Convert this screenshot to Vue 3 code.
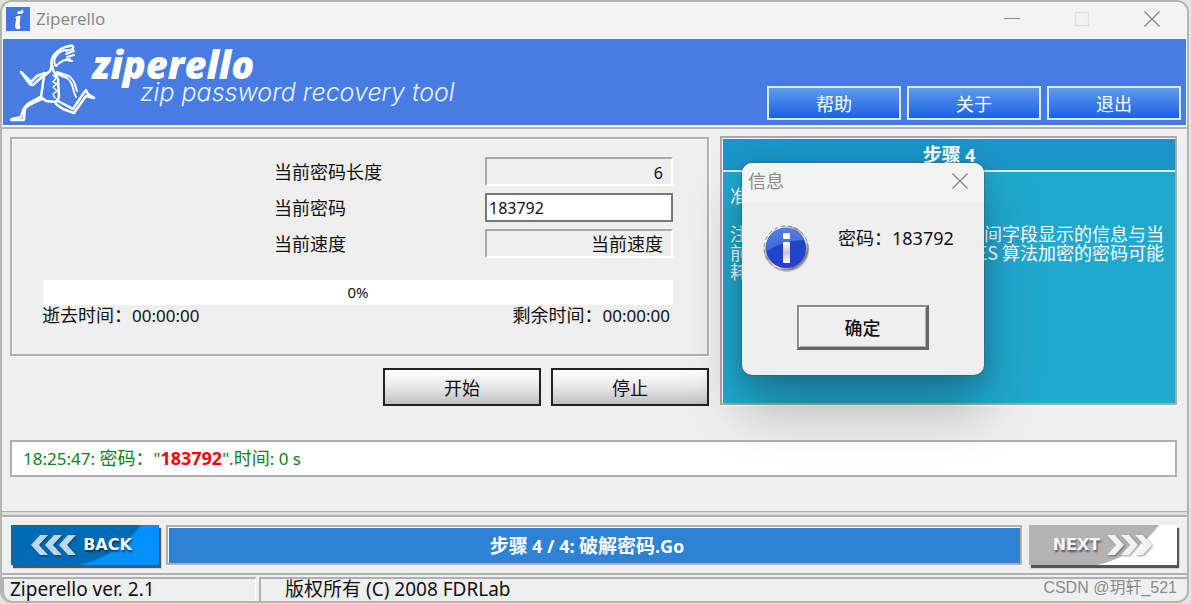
<script setup>
import { ref } from 'vue'

const password = ref('183792')
const menu = ['帮助', '关于', '退出']
const hints = [
  { start: '注', end: '间字段显示的信息与当' },
  { start: '前', end: 'AES 算法加密的密码可能' },
  { start: '耗', end: '' },
]
</script>

<template>
  <div class="desktop">
    <div class="window">
      <header class="titlebar">
        <svg class="app-icon" viewBox="0 0 24 24" aria-hidden="true">
          <rect width="24" height="24" fill="#3f78e0" />
          <path d="M10 9.500l4.500-1-.8 8.500q-.4 2 1 2.500l-1 2.500q-5 .8-4.600-3.500l1.200-7.200-1.200-.2z" fill="#fff" />
          <path d="M11 7l1-3 2 .5 3-2.500-.3 2.500 1.300-.2-2 2.700z" fill="#fff" />
        </svg>
        <span class="app-name">Ziperello</span>
        <button class="caption" aria-label="最小化">
          <svg viewBox="0 0 16 16"><path d="M0 7.500h16" stroke="#8b8b8b" /></svg>
        </button>
        <button class="caption" aria-label="最大化" disabled>
          <svg viewBox="0 0 16 16"><rect x="1.500" y="1.500" width="13" height="13" fill="none" stroke="#dedede" stroke-width="1.300" /></svg>
        </button>
        <button class="caption" aria-label="关闭">
          <svg viewBox="0 0 16 16"><path d="M.5.5l15 15M15.500.5l-15 15" stroke="#858585" stroke-width="1.200" /></svg>
        </button>
      </header>

      <div class="banner">
        <svg class="runner" viewBox="0 0 90 80" fill="none" stroke="#fff" stroke-linecap="round" stroke-linejoin="round" aria-hidden="true">
          <path d="M44 25q-2-9 3-14 6-7 15-8 4-1 3 2" stroke-width="2.500" />
          <path d="M47 22q-2-6 2-10 4-5 10-5M48 23q7-7 14-7M58 8l7-2M58 11l8-3M59 14l7-2M58 17l6 1" stroke-width="2" />
          <path d="M44 22l-2 6-6 5-3 21 5 4 10 1 3-5-1-18-5-9-1-5" stroke-width="2.500" />
          <path d="M45 32l3 3-3 4 4 2-4 3 4 4-4 3 2 4" stroke-width="1.500" />
          <path d="M37 30l-8 3-6 6-10-10 8 11q3 4 6 0l7-6" stroke-width="2.500" />
          <path d="M49 29l12 4q5 3 8 15M49 31l10 4q5 3 7 14l2 5" stroke-width="2" />
          <path d="M32 54l-11 6q-6 4-8 14l-9 2q-2 1 1 1h10q2 0 1-2l1-9q2-4 17-10" stroke-width="2.500" />
          <path d="M50 58l15 8 10-15 3-4 2 4 6 4-8-2-12 17-11-4-7-5" stroke-width="2.500" />
        </svg>
        <div class="brand">
          <span class="brand-name">ziperello</span>
          <span class="tagline">zip password recovery tool</span>
        </div>
        <nav class="menu">
          <button v-for="item in menu" :key="item" class="menu-item">{{ item }}</button>
        </nav>
      </div>

      <main class="content">
        <div class="top">
          <div class="left">
            <section class="state">
              <div class="row">
                <label for="len">当前密码长度</label>
                <output id="len" class="sunken"><span class="num">6</span></output>
              </div>
              <div class="row">
                <label for="pwd">当前密码</label>
                <input id="pwd" v-model="password" class="field num" type="text" />
              </div>
              <div class="row">
                <label for="speed">当前速度</label>
                <output id="speed" class="sunken">当前速度</output>
              </div>
              <div class="progress num">0%</div>
              <div class="times">
                <span>逝去时间：<span class="num">00:00:00</span></span>
                <span>剩余时间：<span class="num">00:00:00</span></span>
              </div>
            </section>
            <div class="actions">
              <button class="action">开始</button>
              <button class="action">停止</button>
            </div>
          </div>

          <aside class="help">
            <h2>步骤 <span class="num">4</span></h2>
            <div class="help-body">
              <p class="intro">准</p>
              <p v-for="h in hints" :key="h.start"><span>{{ h.start }}</span><span>{{ h.end }}</span></p>
            </div>
          </aside>
        </div>

        <div class="log">
          <span class="num">18:25:47: </span>密码：<span class="num">"<b>183792</b>".</span>时间<span class="num">: 0 s</span>
        </div>
      </main>

      <div class="wizard">
        <button class="step back">
          <svg class="fill" viewBox="0 0 148 40" preserveAspectRatio="none" aria-hidden="true">
            <path d="M0 0h148v40H0z" fill="#006bb5" />
            <path d="M130 0h18v40H69Q108 30 130 0z" fill="#0091fe" />
          </svg>
          <svg class="arrows" viewBox="0 0 46 22" aria-hidden="true">
            <path d="M10 1h8l-9 10 9 10h-8L1 11zM24 1h8l-9 10 9 10h-8l-9-10zM38 1h8l-9 10 9 10h-8l-9-10z" fill="#bdd6ee" />
          </svg>
          <span>BACK</span>
        </button>
        <div class="stage"><span>步骤 <span class="num">4 / 4:</span> 破解密码<span class="num">.Go</span></span></div>
        <button class="step next">
          <svg class="fill" viewBox="0 0 148 40" preserveAspectRatio="none" aria-hidden="true">
            <path d="M0 0h148v40H0z" fill="#b3b3b3" />
            <path d="M130 0h18v40H69Q108 30 130 0z" fill="#fff" />
          </svg>
          <span>NEXT</span>
          <svg class="arrows" viewBox="0 0 46 22" aria-hidden="true">
            <path d="M8 1H0l9 10L0 21h8l9-10zM22 1h-8l9 10-9 10h8l9-10zM36 1h-8l9 10-9 10h8l9-10z" fill="#f2f2f2" />
          </svg>
        </button>
      </div>

      <footer class="status">
        <div class="pane version">Ziperello ver. 2.1</div>
        <div class="pane rights">
          <span>版权所有 (C) 2008 FDRLab</span>
          <span class="credit">CSDN @玥轩_521</span>
        </div>
      </footer>

      <div class="dialog" role="dialog" aria-labelledby="dlg-title">
        <div class="dialog-title">
          <span id="dlg-title">信息</span>
          <button class="dialog-close" aria-label="关闭">
            <svg viewBox="0 0 16 16"><path d="M.5.5l15 15M15.500.5l-15 15" stroke="#858585" stroke-width="1.200" /></svg>
          </button>
        </div>
        <div class="dialog-body">
          <svg class="info" viewBox="0 0 48 48" aria-hidden="true">
            <defs>
              <linearGradient id="rim" x1="0" y1="0" x2="1" y2="1">
                <stop offset="0" stop-color="#888" /><stop offset=".2" stop-color="#fff" />
                <stop offset=".4" stop-color="#999" /><stop offset=".6" stop-color="#eee" />
                <stop offset=".8" stop-color="#777" /><stop offset="1" stop-color="#ddd" />
              </linearGradient>
              <linearGradient id="ball" x1="0" y1="0" x2="0" y2="1">
                <stop offset="0" stop-color="#1f48b4" /><stop offset="1" stop-color="#2340d8" />
              </linearGradient>
              <linearGradient id="gloss" x1="0" y1="0" x2="0" y2="1">
                <stop offset="0" stop-color="#5580e6" /><stop offset="1" stop-color="#3c66d4" />
              </linearGradient>
              <linearGradient id="stem" x1="0" y1="0" x2="0" y2="1">
                <stop offset="0" stop-color="#fff" /><stop offset=".5" stop-color="#c8c8c8" /><stop offset="1" stop-color="#fff" />
              </linearGradient>
            </defs>
            <circle cx="25" cy="26" r="22" fill="#000" opacity=".2" />
            <circle cx="24" cy="24" r="22.500" fill="url(#rim)" />
            <circle cx="24" cy="24" r="22" fill="none" stroke="#888" stroke-width="1" stroke-dasharray="4 3" />
            <circle cx="24" cy="24" r="20" fill="url(#ball)" />
            <path d="M4 28a20 20 0 0 1 38-12Q20 16 4 28z" fill="url(#gloss)" />
            <rect x="21" y="9" width="7" height="6" rx="1" fill="#fff" />
            <rect x="21" y="18" width="7" height="21" rx="1" fill="url(#stem)" />
          </svg>
          <span>密码：183792</span>
        </div>
        <button class="ok">确定</button>
      </div>
    </div>
  </div>
</template>

<style>
html,
body {
  margin: 0;
  background: #e4e4e4;
}
</style>

<style scoped>
* {
  box-sizing: border-box;
}
.desktop {
  display: flex;
  min-height: 100vh;
  padding: 0 2px 1px 0;
  font: 18px/24px "Noto Sans CJK SC", sans-serif;
  color: #111;
}
button {
  font: inherit;
  color: inherit;
  padding: 0;
}
.num {
  font-family: "Noto Sans", "Noto Sans CJK SC", sans-serif;
  font-size: 16px;
}
.window {
  position: relative;
  flex: 1;
  display: flex;
  flex-direction: column;
  background: #efefef;
  border: 2px solid #b4b4b4;
  border-radius: 12px;
}
.titlebar {
  display: flex;
  align-items: center;
  height: 36px;
  padding: 0 0 3px 4px;
  background: #f3f3f3;
  border-radius: 10px 10px 0 0;
}
.app-icon {
  width: 24px;
  height: 24px;
}
.app-name {
  flex: 1;
  margin-left: 6px;
  font-family: "Open Sans", sans-serif;
  font-size: 17px;
  color: #858585;
}
.caption {
  width: 70px;
  height: 33px;
  border: 0;
  background: none;
}
.caption svg,
.dialog-close svg {
  display: block;
  width: 16px;
  height: 16px;
  margin: auto;
}
.banner {
  display: flex;
  height: 89px;
  padding: 0 5px;
  background: #477de2;
  border: 1px solid #fff;
  border-bottom-width: 2px;
}
.runner {
  width: 90px;
  height: 80px;
  margin-top: 4px;
}
.brand {
  flex: 1;
  display: flex;
  flex-direction: column;
  margin-left: -6px;
  color: #fff;
  white-space: nowrap;
}
.brand-name {
  font: italic 800 38px/50px "Open Sans", "Noto Sans", sans-serif;
}
.tagline {
  margin: -12px 0 0 48px;
  font: italic 300 25px/30px Inter, sans-serif;
  color: #eaf2ff;
}
.menu {
  display: flex;
  align-items: flex-end;
  gap: 6px;
  padding-bottom: 5px;
}
.menu-item {
  width: 134px;
  height: 34px;
  color: #fff;
  background: linear-gradient(#5f9ceb, #1a60e6);
  border: 2px solid #dce9ff;
}
.content {
  padding: 8px 10px 38px 8px;
  border-top: 2px solid #b4b4b4;
}
.top {
  display: grid;
  grid-template-columns: 699fr 457fr;
  gap: 11px;
}
.state {
  height: 219px;
  padding: 18px 34px 0 30px;
  border: 2px solid #b0b0b0;
  box-shadow: inset 1px 1px #fff, 1px 1px #fff;
}
.row {
  display: flex;
  justify-content: space-between;
  height: 30px;
  margin-bottom: 6px;
  padding-left: 232px;
}
.row label {
  line-height: 28px;
}
.sunken,
.field {
  width: 188px;
  height: 29px;
  color: #111;
}
.sunken {
  padding-right: 8px;
  text-align: right;
  border: 2px solid #fff;
  border-color: #a8a8a8 #fff #fff #a8a8a8;
}
.field {
  padding: 0 2px;
  background: #fff;
  border: 2px solid #777;
  border-radius: 0;
}
.progress {
  height: 25px;
  margin: 21px 0 0 1px;
  font-size: 15px;
  line-height: 25px;
  text-align: center;
  background: #fff;
}
.times {
  display: flex;
  justify-content: space-between;
  padding-right: 3px;
  line-height: 18px;
}
.times .num {
  font-size: 17px;
}
.actions {
  display: flex;
  justify-content: flex-end;
  gap: 10px;
  margin-top: 12px;
}
.action {
  width: 158px;
  height: 38px;
  background: linear-gradient(#fff, #e8e8e8 50%, #bfbfbf);
  border: 2px solid #222;
}
.help {
  height: 269px;
  margin-top: -1px;
  color: #fff;
  background: #20a9cf;
  border: 2px solid #a8a8a8;
  box-shadow: inset 1px 1px #fff, 1px 1px #fff;
}
h2 {
  height: 33px;
  margin: 1px 0 0 1px;
  font-size: 19px;
  line-height: 30px;
  text-align: center;
  background: #1a95c9;
  border-bottom: 2px solid #d6f0f8;
}
h2 .num,
.stage .num {
  font-size: 18px;
}
.help-body {
  padding: 14px 11px 0 8px;
}
.help-body p {
  display: flex;
  justify-content: space-between;
  margin: 0;
  line-height: 19px;
}
.help-body .intro {
  margin-bottom: 19px;
}
.log {
  height: 37px;
  margin-top: 34px;
  padding-left: 11px;
  line-height: 30px;
  white-space: pre;
  color: #0c8414;
  background: #fff;
  border: 2px solid #b0b0b0;
}
.log .num {
  font-size: 17px;
}
.log b {
  font-size: 18px;
  color: #f01;
}
.wizard {
  display: flex;
  align-items: flex-start;
  gap: 7px;
  height: 60px;
  padding: 8px 10px 0 9px;
  border: 2px solid #b0b0b0;
  border-left: 0;
  border-right: 0;
  box-shadow: 0 -3px #dedede, 0 -4px #b0b0b0, inset 0 1px #fff;
}
.step {
  position: relative;
  display: flex;
  align-items: center;
  justify-content: center;
  gap: 7px;
  width: 148px;
  height: 40px;
  border: 0;
  color: #f4f8fc;
  font: bold 16px/20px "DejaVu Sans", sans-serif;
  text-shadow: 1px 2px 2px #0008;
  box-shadow: 2px 3px 1px #555;
}
.back {
  padding-right: 8px;
}
.step .fill {
  position: absolute;
  inset: 0;
  width: 100%;
  height: 100%;
}
.step span,
.arrows {
  position: relative;
}
.arrows {
  width: 46px;
  height: 22px;
  filter: drop-shadow(1px 1px 1px #0006);
}
.stage {
  flex: 1;
  height: 40px;
  padding-right: 14px;
  color: #fff;
  font-size: 19px;
  font-weight: bold;
  line-height: 36px;
  text-align: center;
  background: #2d82d3;
  border: 2px solid #b0b0b0;
  box-shadow: inset 1px 1px #fff, 1px 1px #fff;
}
.status {
  display: flex;
  gap: 3px;
  flex: 1;
  margin-top: 2px;
  font-family: "Noto Sans", "Noto Sans CJK SC", sans-serif;
  font-size: 19px;
}
.pane {
  line-height: 20px;
  white-space: nowrap;
  border-top: 2px solid #b0b0b0;
  border-left: 2px solid #b0b0b0;
}
.version {
  width: 254px;
  padding-left: 6px;
  border-right: 1px solid #fff;
  border-bottom-left-radius: 10px;
}
.rights {
  flex: 1;
  display: flex;
  justify-content: space-between;
  padding: 0 10px 0 24px;
}
.credit {
  font: 16px/18px "Liberation Sans", "Noto Sans CJK SC", sans-serif;
  color: #8a8a8a;
}
.dialog {
  position: absolute;
  top: 161px;
  left: 740px;
  width: 242px;
  height: 212px;
  background: #efefef;
  border-radius: 10px;
  box-shadow: 0 0 2px #444, 0 32px 56px rgba(0, 0, 0, 0.28), 0 4px 20px rgba(0, 0, 0, 0.14);
}
.dialog-title {
  display: flex;
  justify-content: space-between;
  height: 38px;
  padding: 0 16px 0 6px;
  line-height: 34px;
  color: #8a8a8a;
  background: #f3f3f3;
  border-radius: 10px 10px 0 0;
}
.dialog-close {
  height: 36px;
  border: 0;
  background: none;
}
.dialog-body {
  display: flex;
  gap: 28px;
  padding: 23px 0 0 20px;
  font-family: "Noto Sans", "Noto Sans CJK SC", sans-serif;
  line-height: 28px;
}
.info {
  width: 48px;
  height: 48px;
}
.ok {
  display: block;
  width: 132px;
  height: 45px;
  margin: 33px 0 0 55px;
  font-weight: 500;
  background: #efefef;
  border: 2px solid #8c8c8c;
  border-right: 3px solid #666;
  border-bottom: 3px solid #666;
  box-shadow: inset 1px 1px #fff, inset -1px -1px #b0b0b0;
}
</style>
